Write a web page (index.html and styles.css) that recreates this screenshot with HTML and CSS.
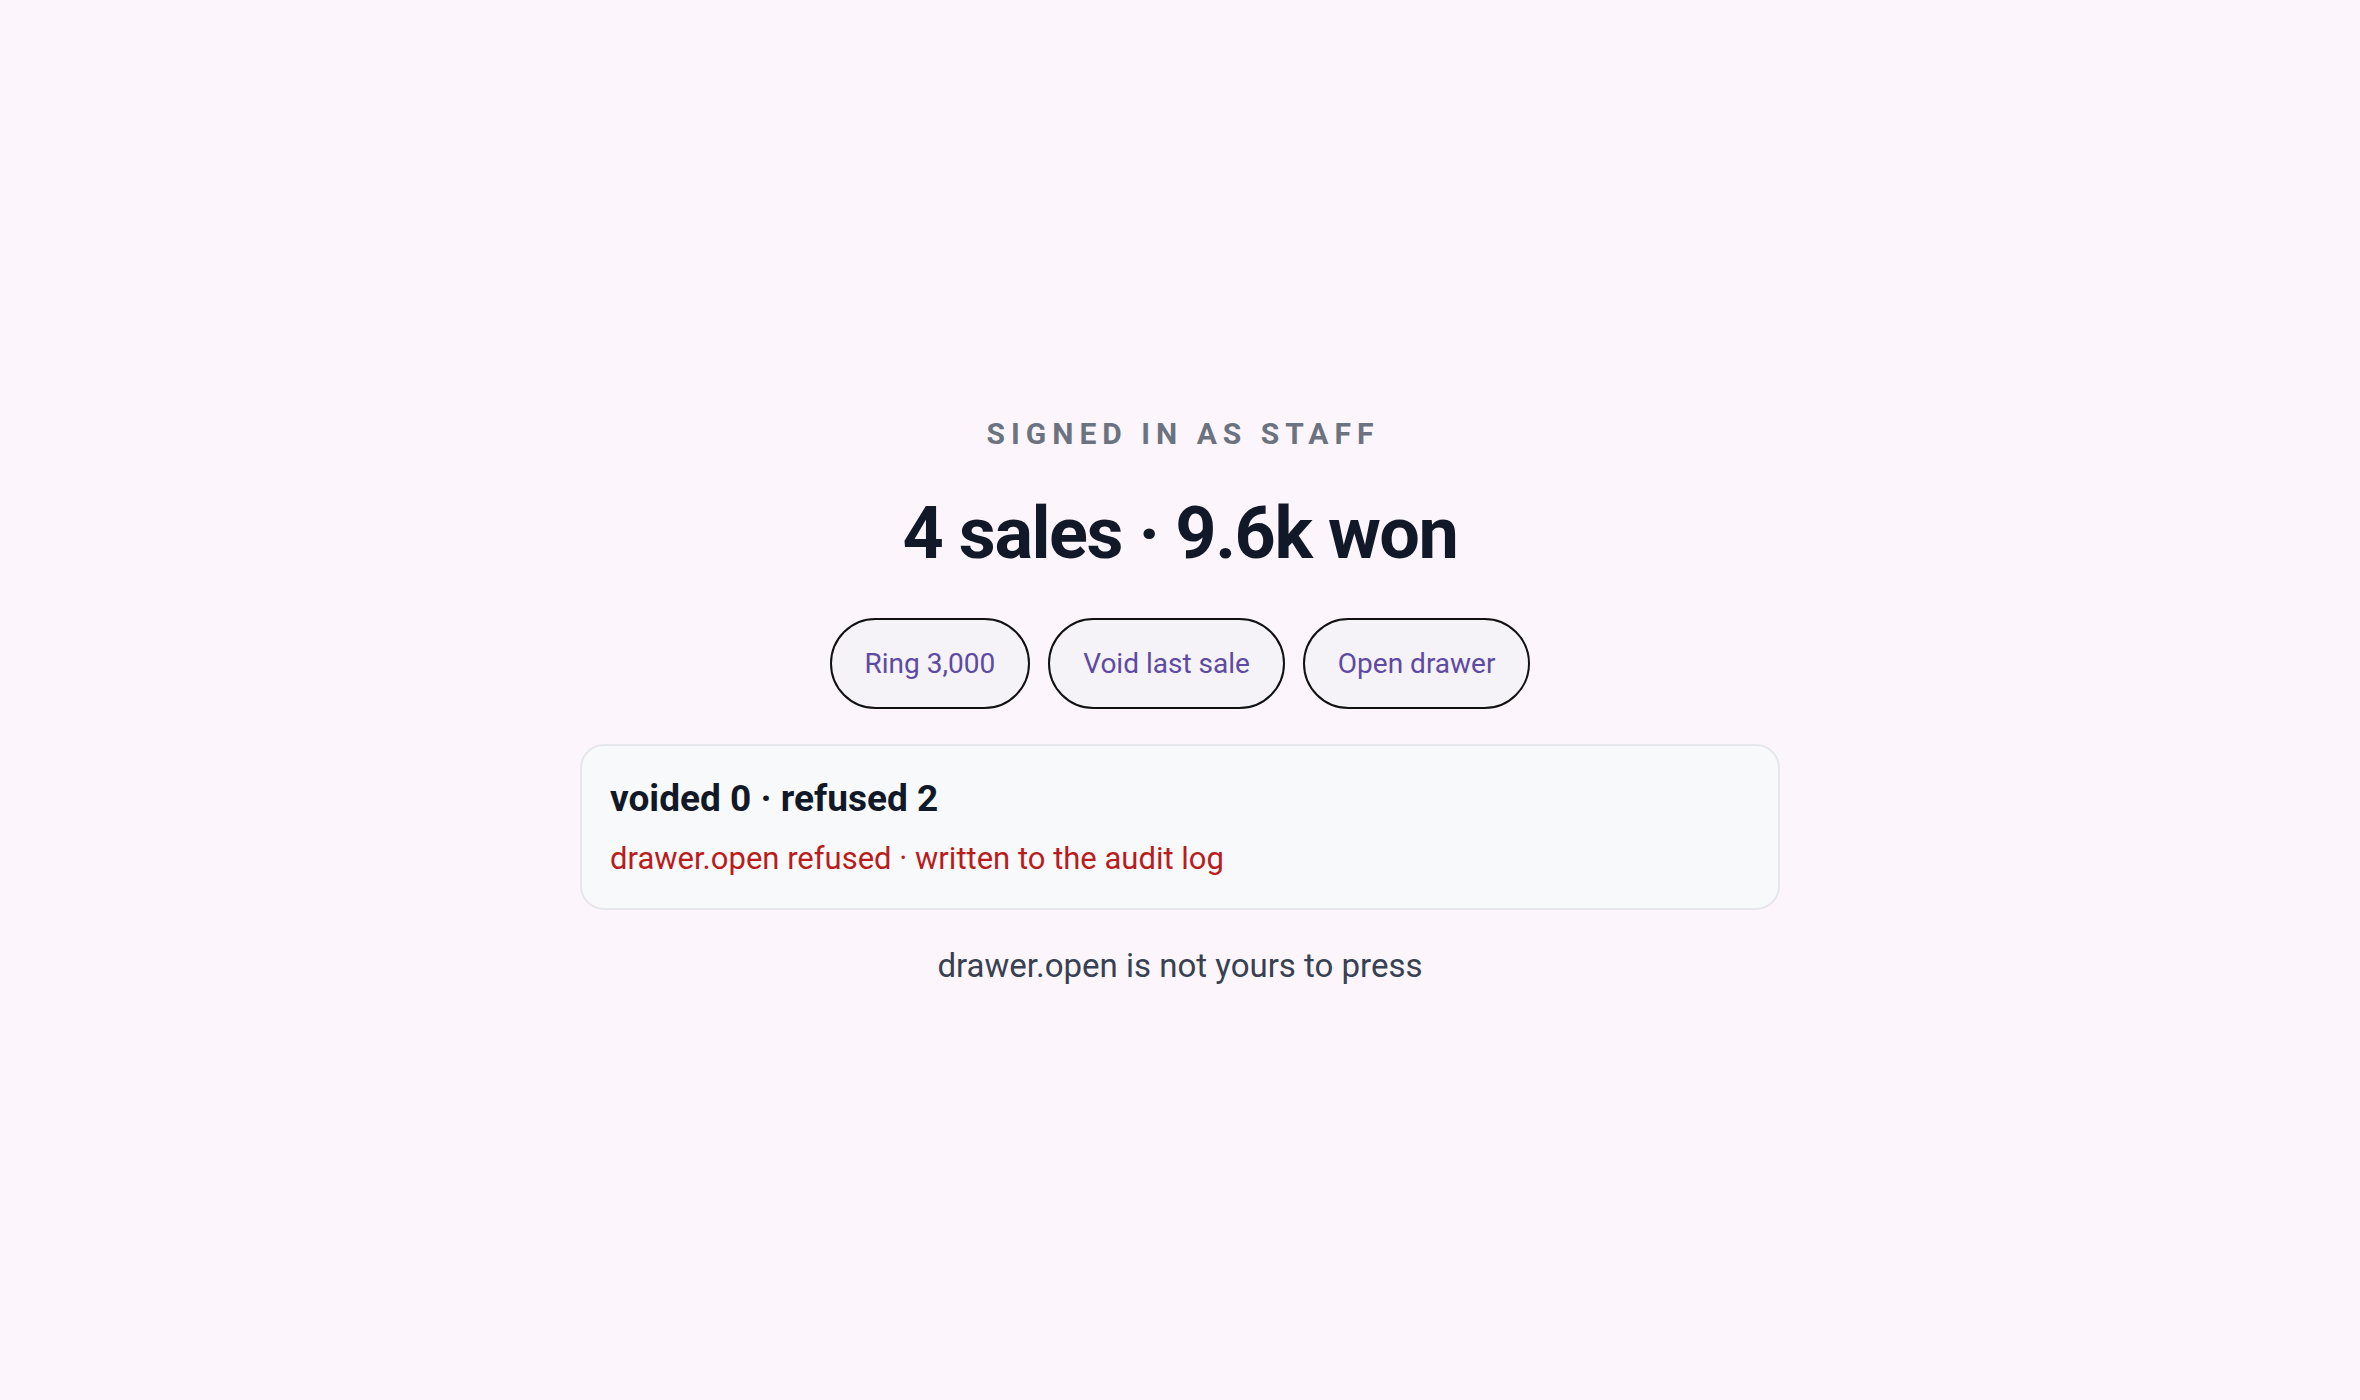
FILE: index.html
```html
<!DOCTYPE html>
<html lang="en">
<head>
<meta charset="utf-8">
<title>Register</title>
<link rel="stylesheet" href="styles.css">
</head>
<body>
<main class="screen">
  <p class="role">Signed in as staff</p>
  <h1 class="total">4 sales · 9.6k won</h1>
  <div class="actions">
    <button class="pill" type="button">Ring 3,000</button>
    <button class="pill" type="button">Void last sale</button>
    <button class="pill" type="button">Open drawer</button>
  </div>
  <section class="status">
    <p class="status-title">voided 0 · refused 2</p>
    <p class="status-note">drawer.open refused · written to the audit log</p>
  </section>
  <p class="hint">drawer.open is not yours to press</p>
</main>
</body>
</html>
```

FILE: styles.css
```css
* {
  box-sizing: border-box;
}

html,
body {
  margin: 0;
  padding: 0;
}

body {
  background: #fcf6fc;
  font-family: Roboto, "Liberation Sans", sans-serif;
  color: #111827;
}

.screen {
  min-height: 100vh;
  display: flex;
  flex-direction: column;
  align-items: center;
  justify-content: center;
}

.role {
  margin: 0;
  font-size: 30px;
  line-height: 35px;
  font-weight: 700;
  letter-spacing: 0.2em;
  text-transform: uppercase;
  color: #6b7280;
  margin-right: -0.2em;
}

.total {
  margin: 41px 0 0;
  font-size: 72px;
  line-height: 84px;
  font-weight: 700;
  letter-spacing: -0.02em;
  color: #111827;
}

.actions {
  margin-top: 42px;
  display: flex;
  gap: 18px;
}

.pill {
  font-family: inherit;
  font-size: 28px;
  line-height: 33px;
  font-weight: 400;
  color: #5d4aa2;
  background: #f5f2f8;
  border: 2px solid #111111;
  border-radius: 999px;
  padding: 27px 33px;
  cursor: pointer;
}

.status {
  margin-top: 35px;
  width: 1200px;
  background: #f8f9fb;
  border: 2px solid #e5e7eb;
  border-radius: 24px;
  padding: 31px 28px 31px;
}

.status-title {
  margin: 0;
  font-size: 37px;
  line-height: 43px;
  font-weight: 700;
  color: #111827;
}

.status-note {
  margin: 21px 0 0;
  font-size: 31px;
  line-height: 36px;
  color: #b91c1c;
}

.hint {
  margin: 36px 0 0;
  font-size: 33px;
  line-height: 39px;
  color: #374151;
}
```
